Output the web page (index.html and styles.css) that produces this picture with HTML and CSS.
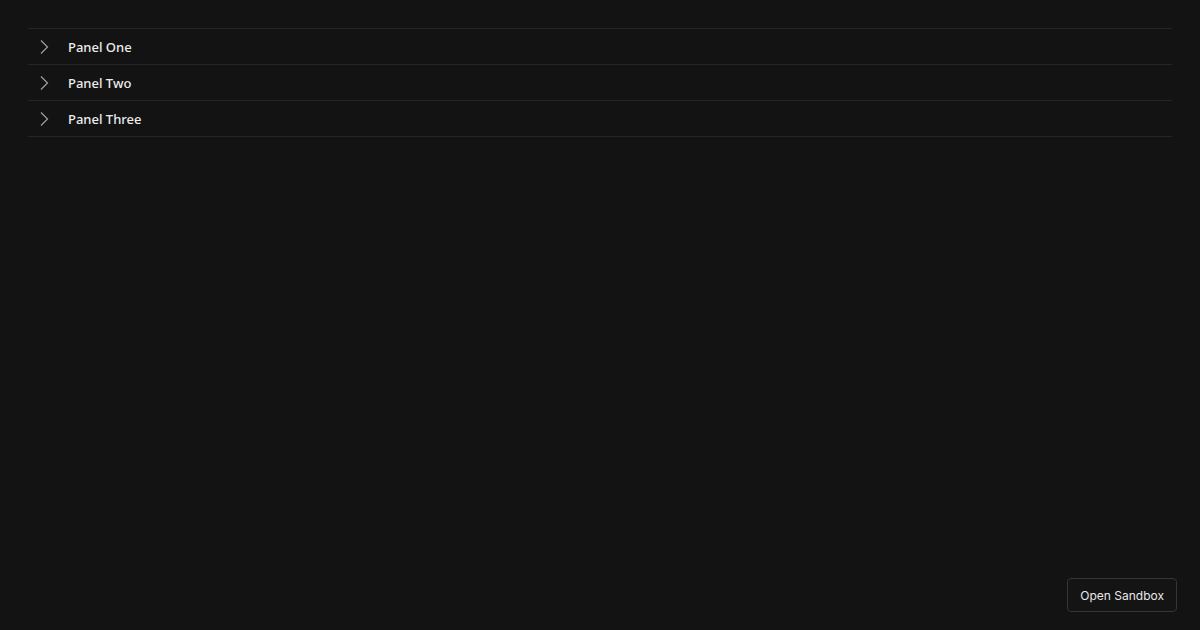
FILE: index.html
```html
<!DOCTYPE html>
<html lang="en">
  <head>
    <meta charset="UTF-8" />
    <title>Accordion</title>
    <link rel="stylesheet" href="styles.css">
  </head>
  <body>
    <div class="accordion">
      <div class="panel">
        <svg class="chevron" width="16" height="16" viewBox="0 0 16 16"><path d="M5 1.5 L11.5 8 L5 14.5" fill="none" stroke="#a0a0a0" stroke-width="1.2"/></svg>
        <span class="title">Panel One</span>
      </div>
      <div class="panel">
        <svg class="chevron" width="16" height="16" viewBox="0 0 16 16"><path d="M5 1.5 L11.5 8 L5 14.5" fill="none" stroke="#a0a0a0" stroke-width="1.2"/></svg>
        <span class="title">Panel Two</span>
      </div>
      <div class="panel">
        <svg class="chevron" width="16" height="16" viewBox="0 0 16 16"><path d="M5 1.5 L11.5 8 L5 14.5" fill="none" stroke="#a0a0a0" stroke-width="1.2"/></svg>
        <span class="title">Panel Three</span>
      </div>
    </div>
    <button class="sandbox-btn">Open Sandbox</button>
  </body>
</html>
```

FILE: styles.css
```css
body {
  margin: 0;
  padding: 28px;
  background-color: #131313;
  font-family: "Noto Sans", sans-serif;
  height: 630px;
  box-sizing: border-box;
}
.accordion {
  border-top: 1px solid #262626;
}
.panel {
  display: flex;
  align-items: center;
  height: 35px;
  border-bottom: 1px solid #262626;
  padding-left: 8px;
}
.chevron {
  margin-right: 16px;
}
.title {
  color: #ececec;
  font-size: 13px;
  font-weight: 500;
}
.sandbox-btn {
  position: absolute;
  right: 23px;
  bottom: 18px;
  height: 34px;
  padding: 0 12px;
  background-color: #141414;
  color: #e8e8e8;
  border: 1px solid #363636;
  border-radius: 4px;
  font-family: Inter, sans-serif;
  font-size: 12px;
}
```
